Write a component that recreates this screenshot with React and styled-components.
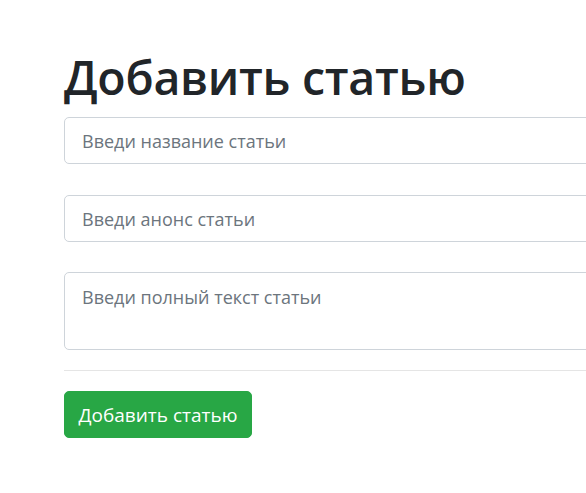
import React from 'react';
import styled, { createGlobalStyle } from 'styled-components';

const GlobalStyle = createGlobalStyle`
  html, body {
    margin: 0;
    padding: 0;
    background: #fff;
    overflow: hidden;
  }
  body {
    font-family: "Open Sans", "Noto Sans", sans-serif;
    color: #212529;
  }
`;

const App = () => {
  return (
    <Container>
      <GlobalStyle />
      <Title>Добавить статью</Title>
      <Form onSubmit={e => e.preventDefault()}>
        <Field>
          <Input type="text" placeholder="Введи название статьи" />
        </Field>
        <Field>
          <Input type="text" placeholder="Введи анонс статьи" />
        </Field>
        <Field>
          <TextArea placeholder="Введи полный текст статьи" />
        </Field>
        <Divider />
        <SubmitButton type="submit">Добавить статью</SubmitButton>
      </Form>
    </Container>
  );
};

export default App;

const Container = styled.div`
  width: 700px;
  padding: 47px 0 40px 64px;
`;

const Title = styled.h1`
  font-size: 46.5px;
  font-weight: 600;
  line-height: 60px;
  margin: 0 0 10px;
  letter-spacing: -0.3px;
  color: #212529;
`;

const Form = styled.form`
  display: flex;
  flex-direction: column;
`;

const Field = styled.div`
  margin-bottom: 31px;

  &:nth-of-type(2) {
    margin-bottom: 30px;
  }

  &:last-of-type {
    margin-bottom: 20px;
  }
`;

const Input = styled.input`
  box-sizing: border-box;
  display: block;
  width: 100%;
  height: 47px;
  padding: 0 17px;
  font-family: "Open Sans", "Noto Sans", sans-serif;
  font-size: 18px;
  color: #495057;
  background: #fff;
  border: 1px solid #ced4da;
  border-radius: 5px;
  outline: none;

  &::placeholder {
    color: #6c757d;
  }
`;

const TextArea = styled.textarea`
  box-sizing: border-box;
  display: block;
  width: 100%;
  height: 78px;
  padding: 11px 17px;
  font-family: "Open Sans", "Noto Sans", sans-serif;
  font-size: 18px;
  line-height: 1.5;
  color: #495057;
  background: #fff;
  border: 1px solid #ced4da;
  border-radius: 5px;
  resize: none;
  outline: none;

  &::placeholder {
    color: #6c757d;
  }
`;

const Divider = styled.hr`
  width: 100%;
  margin: 0 0 20px;
  border: 0;
  border-top: 1px solid rgba(0, 0, 0, 0.1);
`;

const SubmitButton = styled.button`
  align-self: flex-start;
  box-sizing: border-box;
  width: 188px;
  height: 47px;
  padding: 0;
  font-family: "Open Sans", "Noto Sans", sans-serif;
  font-size: 19px;
  color: #fff;
  background-color: #28a745;
  border: 1px solid #28a745;
  border-radius: 5px;
  cursor: pointer;
`;
